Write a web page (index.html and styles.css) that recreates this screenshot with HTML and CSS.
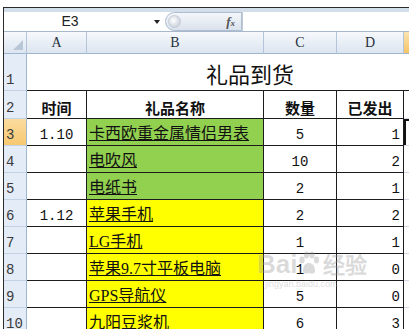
FILE: index.html
```html
<!DOCTYPE html>
<html lang="zh-CN">
<head>
    <meta charset="UTF-8">
    <meta name="viewport" content="width=device-width, initial-scale=1.0">
    <title>礼品到货</title>
    <link rel="stylesheet" href="styles.css">
</head>
<body>
    <div class="window">
        <!-- formula bar -->
        <div class="formula-bar">
            <div class="fbar-strip"></div>
            <div class="fbar-row">
                <div class="name-box">E3</div>
                <div class="name-drop"><span class="caret"></span></div>
                <div class="fx-btn"><span class="fx-knob"></span><span class="fx">f<span class="fx-x">x</span></span></div>
                <div class="formula-input"></div>
            </div>
        </div>

        <!-- sheet -->
        <div class="sheet">
            <div class="corner"><span class="corner-tri"></span></div>
            <div class="col-h">A</div>
            <div class="col-h">B</div>
            <div class="col-h">C</div>
            <div class="col-h">D</div>
            <div class="col-h col-sel"></div>

            <div class="row-h">1</div>
            <div class="cell title">礼品到货</div>

            <div class="row-h">2</div>
            <div class="cell head">时间</div>
            <div class="cell head">礼品名称</div>
            <div class="cell head">数量</div>
            <div class="cell head">已发出</div>
            <div class="e-cell"></div>

            <div class="row-h row-sel">3</div>
            <div class="cell num">1.10</div>
            <div class="cell name green">卡西欧重金属情侣男表</div>
            <div class="cell num">5</div>
            <div class="cell num right">1</div>
            <div class="e-cell e-sel"></div>

            <div class="row-h">4</div>
            <div class="cell num"></div>
            <div class="cell name green">电吹风</div>
            <div class="cell num">10</div>
            <div class="cell num right">2</div>
            <div class="e-cell"></div>

            <div class="row-h">5</div>
            <div class="cell num"></div>
            <div class="cell name green">电纸书</div>
            <div class="cell num">2</div>
            <div class="cell num right">1</div>
            <div class="e-cell"></div>

            <div class="row-h">6</div>
            <div class="cell num">1.12</div>
            <div class="cell name yellow">苹果手机</div>
            <div class="cell num">2</div>
            <div class="cell num right">2</div>
            <div class="e-cell"></div>

            <div class="row-h">7</div>
            <div class="cell num"></div>
            <div class="cell name yellow">LG手机</div>
            <div class="cell num">1</div>
            <div class="cell num right">1</div>
            <div class="e-cell"></div>

            <div class="row-h">8</div>
            <div class="cell num"></div>
            <div class="cell name yellow">苹果9.7寸平板电脑</div>
            <div class="cell num">1</div>
            <div class="cell num right">0</div>
            <div class="e-cell"></div>

            <div class="row-h">9</div>
            <div class="cell num"></div>
            <div class="cell name yellow">GPS导航仪</div>
            <div class="cell num">5</div>
            <div class="cell num right">0</div>
            <div class="e-cell"></div>

            <div class="row-h">10</div>
            <div class="cell num"></div>
            <div class="cell name yellow">九阳豆浆机</div>
            <div class="cell num">6</div>
            <div class="cell num right">3</div>
            <div class="e-cell"></div>
        </div>

        <!-- watermark -->
        <div class="watermark">
            <div class="wm-line">
                <span>Bai</span>
                <svg class="wm-paw" width="22" height="24" viewBox="0 0 22 24">
                    <ellipse cx="4" cy="9" rx="2.6" ry="3.4" />
                    <ellipse cx="8.5" cy="4" rx="2.6" ry="3.4" />
                    <ellipse cx="14" cy="4" rx="2.6" ry="3.4" />
                    <ellipse cx="18.5" cy="9" rx="2.6" ry="3.4" />
                    <path d="M5 20 C5 14 8 12 11 12 C14 12 17 14 17 20 C17 23 14 23 11 22 C8 23 5 23 5 20 Z" />
                </svg>
                <span class="wm-cn">经验</span>
            </div>
            <div class="wm-url">jingyan.baidu.com</div>
        </div>
    </div>
</body>
</html>
```

FILE: styles.css
```css
body {
    margin: 0;
    background: #fff;
    overflow: hidden;
    font-family: "Noto Sans CJK SC", sans-serif;
}
.window {
    position: relative;
    margin: 7px 0 0 3px;
    border-top: 1px solid #2b2b2b;
    border-left: 1px solid #2b2b2b;
    height: 400px;
}

/* formula bar */
.fbar-strip {
    height: 4px;
    background: #d3deeb;
}
.fbar-row {
    display: flex;
    height: 19px;
    border-bottom: 1px solid #a7b8cd;
    background: #fff;
}
.name-box {
    width: 132px;
    text-align: center;
    font: 14px/19px "Liberation Sans", sans-serif;
    color: #222;
}
.name-drop {
    width: 29px;
    display: flex;
    align-items: center;
    justify-content: flex-end;
    padding-right: 5px;
    box-sizing: border-box;
}
.caret {
    border-left: 3.5px solid transparent;
    border-right: 3.5px solid transparent;
    border-top: 4px solid #222;
}
.fx-btn {
    width: 77px;
    box-sizing: border-box;
    display: flex;
    align-items: center;
    border: 1px solid #aebdd0;
    border-radius: 10px 0 0 10px;
    background: linear-gradient(#f4f7fa, #dae2ec);
}
.fx-knob {
    width: 11px;
    height: 11px;
    margin-left: 2px;
    border-radius: 50%;
    background: radial-gradient(circle at 40% 40%, #fff, #b9c3cf);
    border: 1px solid #c3ccd7;
}
.fx {
    margin-left: auto;
    margin-right: 6px;
    font: italic bold 13px "Liberation Serif", serif;
    color: #555;
}
.fx-x {
    font-size: 9px;
}
.formula-input {
    flex: 1;
    border-left: 1px solid #c0cbd8;
}

/* sheet grid */
.sheet {
    display: grid;
    grid-template-columns: 23px 60px 177px 73px 67px 1fr;
    grid-template-rows: 22px 37px 28px repeat(8, 27px);
}
.corner,
.col-h {
    box-sizing: border-box;
    background: linear-gradient(#f6f8fc, #dce5f0);
    border-right: 1px solid #b4c5d9;
    border-bottom: 1px solid #9eb6ce;
}
.corner {
    position: relative;
}
.corner-tri {
    position: absolute;
    right: 3px;
    bottom: 3px;
    border-left: 10px solid transparent;
    border-bottom: 10px solid #b9c6d6;
}
.col-h {
    display: flex;
    align-items: center;
    justify-content: center;
    font: 14px "Liberation Serif", serif;
    color: #27313d;
}
.col-sel {
    background: linear-gradient(#fbe3b0, #f6c565);
    border-right: none;
}
.row-h {
    box-sizing: border-box;
    display: flex;
    align-items: flex-end;
    padding: 0 0 3px 2px;
    background: #e4ecf7;
    border-right: 1px solid #9eb6ce;
    border-bottom: 1px solid #c3d2e4;
    font: 14px/1 "Liberation Mono", monospace;
    color: #3a3a3a;
}
.row-sel {
    background: linear-gradient(#fbdc9f, #f7c870);
}

.cell {
    box-sizing: border-box;
    display: flex;
    align-items: flex-end;
    padding-bottom: 3px;
    line-height: 1;
    white-space: nowrap;
    overflow: hidden;
    color: #111;
    border-right: 1px solid #1c1c1c;
    border-bottom: 1px solid #1c1c1c;
}
.title {
    grid-column: 2 / 7;
    border-right: none;
    overflow: visible;
    justify-content: center;
    padding: 0 0 2px 64px;
    font-size: 22px;
    line-height: 1.3;
    color: #111;
}
.head {
    justify-content: center;
    font-size: 15px;
    font-weight: bold;
}
.num {
    justify-content: center;
    font: 14px/1 "Liberation Mono", monospace;
}
.right {
    justify-content: flex-end;
    padding-right: 3px;
}
.name {
    padding-left: 2px;
    font-family: "Liberation Serif", "Noto Sans CJK SC", serif;
    font-size: 16px;
    text-decoration: underline;
}
.green {
    background: #92d050;
}
.yellow {
    background: #ffff00;
}
.e-cell {
    border-bottom: 1px solid #d4dbe6;
}
.e-sel {
    box-shadow: inset 2px 2px 0 #111;
}

/* watermark */
.watermark {
    position: absolute;
    left: 253px;
    top: 243px;
    color: rgba(150, 150, 150, 0.35);
}
.wm-line {
    display: flex;
    align-items: flex-end;
    gap: 1px;
    font: bold 26px/1 "Liberation Sans", sans-serif;
}
.wm-paw {
    fill: rgba(150, 150, 150, 0.35);
    margin-bottom: 2px;
}
.wm-cn {
    font-size: 22px;
    margin-left: 2px;
}
.wm-url {
    margin-top: 2px;
    font: 9px "Liberation Sans", sans-serif;
    padding-left: 8px;
}
```
